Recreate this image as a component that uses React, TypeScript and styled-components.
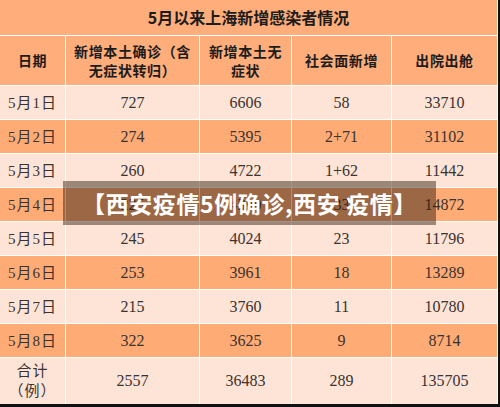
import React from 'react';
import styled, { createGlobalStyle } from 'styled-components';

const GlobalStyle = createGlobalStyle`
  html, body {
    margin: 0;
    padding: 0;
    background: #ffffff;
  }
`;

const Frame = styled.div`
  position: relative;
  width: 500px;
  height: 407px;
  box-sizing: border-box;
  background: #ffffff;
  border-right: 2px solid #111111;
  border-bottom: 3px solid #111111;
  overflow: hidden;
`;

const Grid = styled.div`
  display: grid;
  grid-template-columns: 65px 133px 91px 99px 105px;
  grid-template-rows: 35px 49px repeat(8, 33px) 46px;
  gap: 1px;
`;

const Title = styled.div`
  grid-column: 1 / span 5;
  background: #ffad7a;
  display: flex;
  align-items: center;
  justify-content: center;
  font-family: 'Noto Sans CJK SC', sans-serif;
  font-weight: 700;
  font-size: 16px;
  color: #1c1c1c;
  padding-bottom: 2px;
  box-sizing: border-box;
`;

const Head = styled.div`
  background: #ffad7a;
  display: flex;
  align-items: center;
  justify-content: center;
  text-align: center;
  font-family: 'Noto Sans CJK SC', sans-serif;
  font-weight: 700;
  font-size: 14px;
  letter-spacing: 0.6px;
  line-height: 19px;
  color: #1c1c1c;
`;

const Cell = styled.div<{ $dark?: boolean; $cjk?: boolean }>`
  background: ${p => (p.$dark ? '#ffab75' : '#fee4d6')};
  display: flex;
  align-items: center;
  justify-content: center;
  text-align: center;
  font-family: ${p =>
    p.$cjk ? "'Liberation Serif', 'Noto Sans CJK SC', serif" : "'Liberation Serif', serif"};
  font-size: ${p => (p.$cjk ? '15px' : '16px')};
  letter-spacing: ${p => (p.$cjk ? '1px' : '0')};
  line-height: 20px;
  color: #3a3330;
`;

const Banner = styled.div`
  position: absolute;
  left: 63px;
  top: 181px;
  width: 373px;
  height: 44px;
  background: rgba(45, 28, 15, 0.47);
  display: flex;
  align-items: center;
  justify-content: center;
  font-family: 'Noto Sans CJK SC', sans-serif;
  font-weight: 700;
  font-size: 23px;
  letter-spacing: 0.6px;
  color: #ffffff;
  white-space: nowrap;
`;

const rows = [
  ['5月1日', '727', '6606', '58', '33710'],
  ['5月2日', '274', '5395', '2+71', '31102'],
  ['5月3日', '260', '4722', '1+62', '11442'],
  ['5月4日', '225', '4390', '33', '14872'],
  ['5月5日', '245', '4024', '23', '11796'],
  ['5月6日', '253', '3961', '18', '13289'],
  ['5月7日', '215', '3760', '11', '10780'],
  ['5月8日', '322', '3625', '9', '8714'],
];

const App = () => {
  return (
    <>
      <GlobalStyle />
      <Frame>
        <Grid>
          <Title>5月以来上海新增感染者情况</Title>
          <Head>日期</Head>
          <Head>
            新增本土确诊（含
            <br />
            无症状转归）
          </Head>
          <Head>
            新增本土无
            <br />
            症状
          </Head>
          <Head>社会面新增</Head>
          <Head>出院出舱</Head>
          {rows.map((row, index) => (
            <React.Fragment key={index}>
              {row.map((value, i) => (
                <Cell key={i} $dark={index % 2 === 1} $cjk={i === 0}>
                  {value}
                </Cell>
              ))}
            </React.Fragment>
          ))}
          <Cell $cjk>
            合计
            <br />
            （例）
          </Cell>
          <Cell>2557</Cell>
          <Cell>36483</Cell>
          <Cell>289</Cell>
          <Cell>135705</Cell>
        </Grid>
        <Banner>【西安疫情5例确诊,西安 疫情】</Banner>
      </Frame>
    </>
  );
};

export default App;
